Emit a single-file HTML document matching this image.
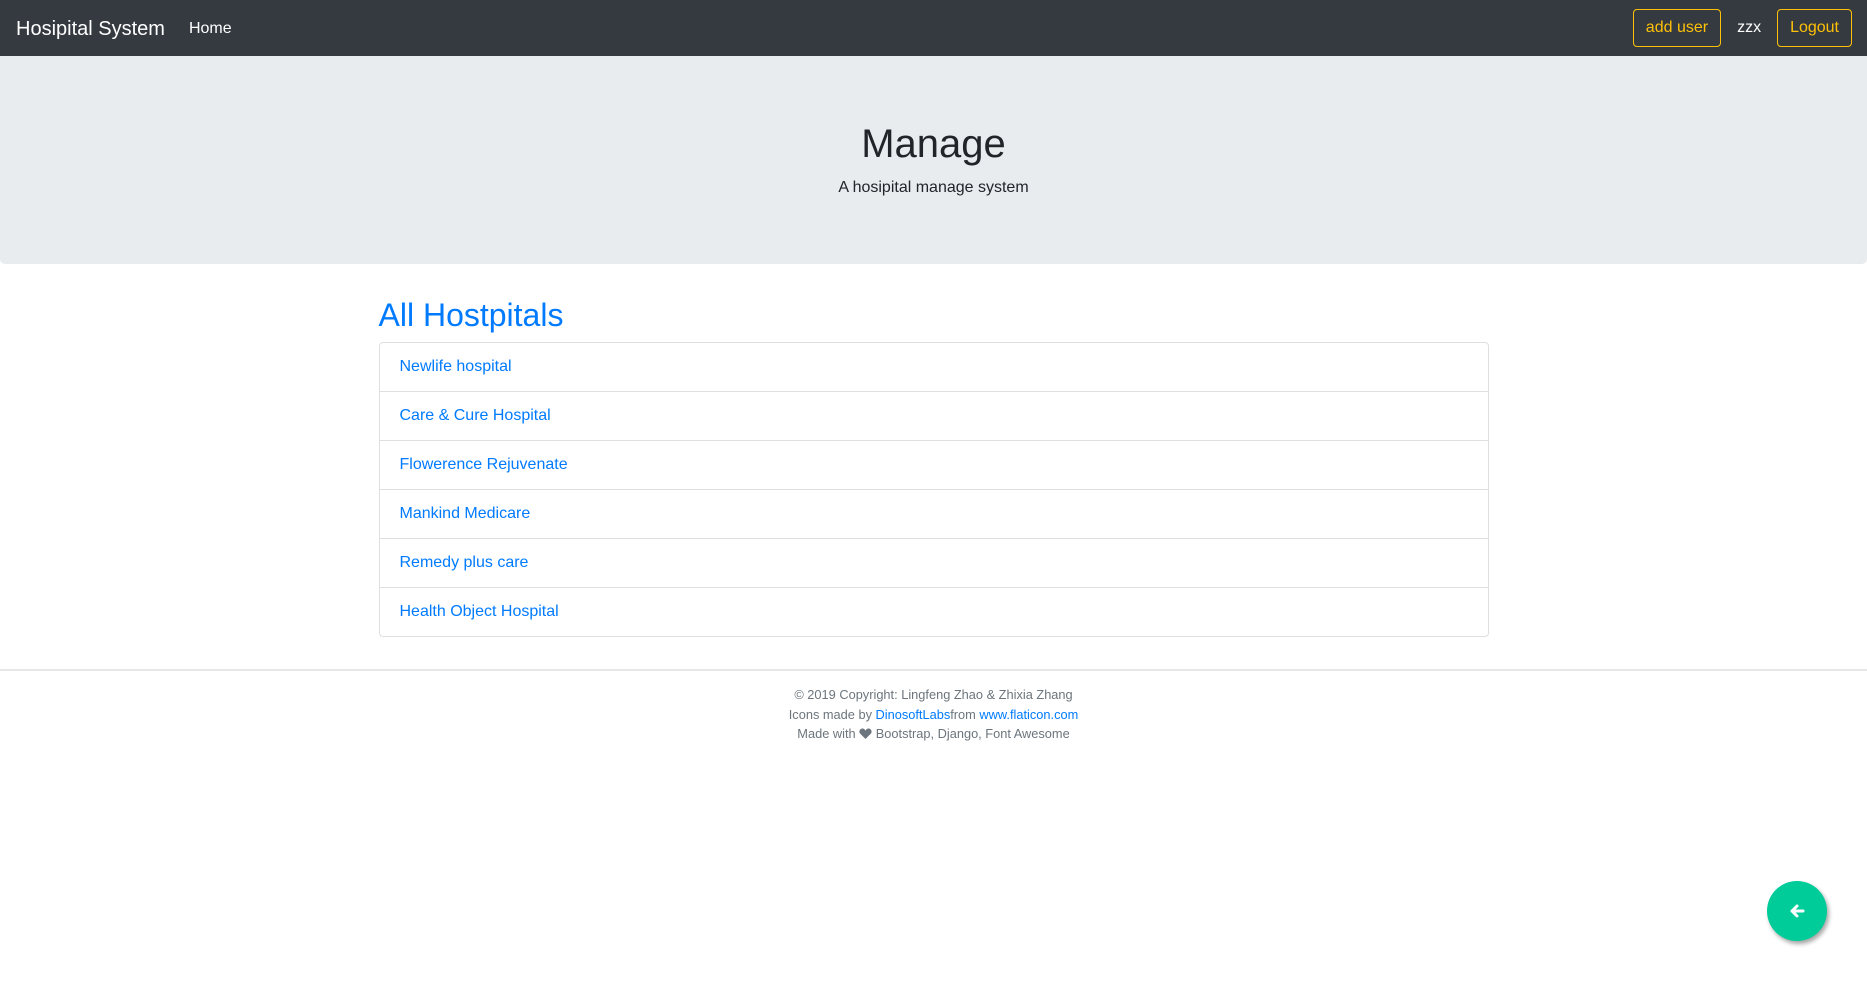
<!DOCTYPE html>
<html><head><meta charset="utf-8"><style>
*{box-sizing:border-box}
body{margin:0;font-family:"Liberation Sans",sans-serif;font-size:16px;line-height:1.5;color:#212529;background:#fff;width:1867px;height:981px;overflow:hidden;position:relative}
a{color:#007bff;text-decoration:none}
nav{height:56px;background:#343a40;display:flex;align-items:center;padding:1px 16px 0;position:relative}
.brand{color:#fff;font-size:20px;margin-right:16px;line-height:30px}
.nl{color:#fff;padding:8px}
.right{position:absolute;right:15px;top:9px;display:flex;align-items:center}
.btn{border:1px solid #ffc107;color:#ffc107;border-radius:4px;padding:6px 12px;line-height:24px;display:inline-block}
.zzx{color:#fff;padding:0 16px}
.jumbo{background:#e9ecef;border-radius:0 0 5px 5px;padding:64px 32px;text-align:center;margin-bottom:32px}
.jumbo h1{margin:0 0 8px;font-size:40px;font-weight:500;line-height:48px}
.jumbo p{margin:0}
.cont{width:1140px;margin:0 auto;padding:0 15px}
h2{margin:0 0 8px;font-size:32px;font-weight:500;line-height:38.4px;color:#007bff}
.lg{border:1px solid rgba(0,0,0,.125);border-radius:4px}
.lg a{display:block;padding:12px 20px;border-top:1px solid rgba(0,0,0,.125)}
.lg a:first-child{border-top:0}
footer{margin-top:32px;border-top:2px solid #e6e6e6;text-align:center;font-size:12.8px;line-height:19.2px;color:#6c757d;padding-top:14px}
.fab{position:absolute;left:1767px;top:881px;width:60px;height:60px;border-radius:50%;background:#00cc99;box-shadow:2px 3px 4px rgba(0,0,0,.35);display:flex;align-items:center;justify-content:center}
</style></head><body>
<nav><span class="brand">Hosipital System</span><a class="nl" href="#">Home</a>
<div class="right"><span class="btn">add user</span><span class="zzx">zzx</span><span class="btn">Logout</span></div></nav>
<div class="jumbo"><h1>Manage</h1><p>A hosipital manage system</p></div>
<div class="cont"><h2>All Hostpitals</h2>
<div class="lg"><a href="#">Newlife hospital</a><a href="#">Care &amp; Cure Hospital</a><a href="#">Flowerence Rejuvenate</a><a href="#">Mankind Medicare</a><a href="#">Remedy plus care</a><a href="#">Health Object Hospital</a></div></div>
<footer>© 2019 Copyright: Lingfeng Zhao &amp; Zhixia Zhang<br>Icons made by <a href="#">DinosoftLabs</a>from <a href="#">www.flaticon.com</a><br>Made with <svg width="13" height="11" viewBox="0 0 24 21" style="vertical-align:-1px"><path d="M12 21L2 11C-1 8 0 2 6 1c3 0 5 2 6 4 1-2 3-4 6-4 6 1 7 7 4 10z" fill="#6c757d"/></svg> Bootstrap, Django, Font Awesome</footer>
<div class="fab"><svg width="16" height="14" viewBox="0 0 16 14"><path d="M8 2L3 7l5 5M3 7h11" stroke="#fff" stroke-width="3" fill="none" stroke-linecap="round" stroke-linejoin="round"/></svg></div>
</body></html>
